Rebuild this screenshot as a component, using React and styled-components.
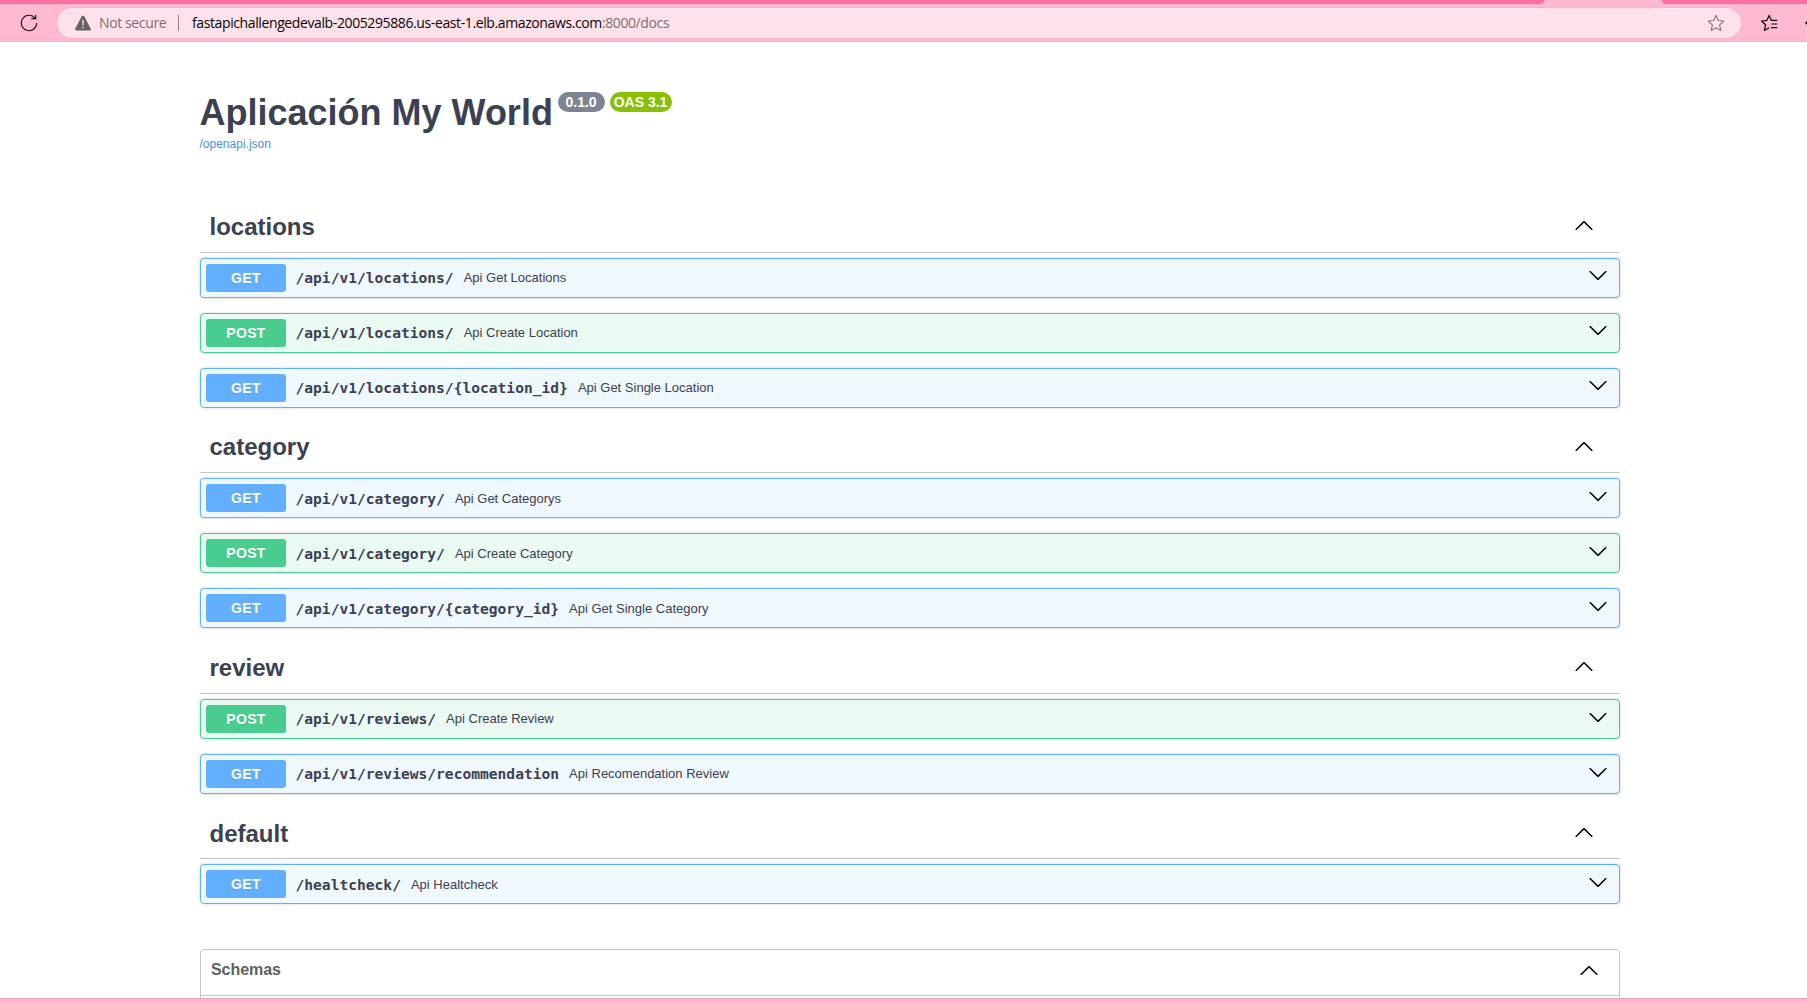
import React from "react";
import styled, { createGlobalStyle } from "styled-components";

const GlobalStyle = createGlobalStyle`
  * { box-sizing: border-box; }
  body {
    margin: 0;
    background: #fff;
    color: #3b4151;
    font-family: "Liberation Sans", Arial, sans-serif;
    overflow: hidden;
  }
`;

const Window = styled.div`
  display: flex;
  flex-direction: column;
  height: 1002px;
  overflow: hidden;
`;

const TabStrip = styled.div`
  display: flex;
  justify-content: space-between;
  flex: none;
  height: 4px;
  background: #ffbad1;
`;

const TabEdge = styled.div`
  width: ${(p) => p.$width}px;
  background: #ff70a0;
  border-radius: ${(p) => (p.$side === "left" ? "0 0 6px 0" : "0 0 0 6px")};
`;

const Toolbar = styled.header`
  display: flex;
  align-items: center;
  flex: none;
  height: 38px;
  padding: 0 0 0 19px;
  background: #ffbad1;
  box-shadow: inset 0 -1px #f8b4cb;
  overflow: hidden;
`;

const AddressBar = styled.div`
  display: flex;
  align-items: center;
  flex: none;
  width: 1684px;
  height: 30px;
  margin-left: 18px;
  padding: 0 15px 0 17px;
  border-radius: 15px;
  background: #ffe1ea;
  box-shadow: 0 0 3px rgba(190, 80, 120, 0.16);
  font: 14px/30px "Open Sans", "Noto Sans", sans-serif;
  white-space: nowrap;
`;

const Security = styled.span`
  width: 68px;
  margin-left: 7px;
  color: #767074;
  letter-spacing: -0.38px;
`;

const Divider = styled.i`
  width: 1px;
  height: 16px;
  margin: 0 13px 0 11px;
  background: #8f8187;
`;

const Url = styled.span`
  flex: 1;
  color: #080808;
  letter-spacing: -0.39px;
`;

const UrlTail = styled.span`
  color: #7b7074;
`;

const ToolIcon = styled.svg`
  display: block;
  flex: none;
  margin-left: ${(p) => p.$gap || 0}px;
  overflow: visible;
`;

const Page = styled.main`
  display: flex;
  flex-direction: column;
  flex: none;
  width: 1420px;
  height: 956px;
  margin: 0 auto 0 200px;
  overflow: visible;
`;

const Info = styled.section`
  flex: none;
  height: 161px;
  padding-top: 50px;
`;

const TitleRow = styled.div`
  display: flex;
  align-items: flex-start;
  height: 43px;
`;

const Title = styled.h1`
  width: 352px;
  margin: 0 6.5px 0 -0.5px;
  font-size: 36px;
  line-height: 42px;
  white-space: nowrap;
`;

const Badge = styled.span`
  flex: none;
  width: ${(p) => p.$width}px;
  height: 20px;
  margin: 0 5px 0 0;
  padding-left: ${(p) => p.$inset}px;
  border-radius: 10px;
  background: ${(p) => p.$color};
  color: #fff;
  font: bold 14px/20px "Liberation Sans", Arial, sans-serif;
  white-space: nowrap;
`;

const SpecLink = styled.a`
  display: block;
  margin-left: -0.5px;
  color: #4990e2;
  font-size: 12px;
  line-height: 18px;
`;

const Section = styled.section`
  display: flex;
  flex-direction: column;
  flex: none;
`;

const SectionHeader = styled.div`
  display: flex;
  align-items: flex-start;
  justify-content: space-between;
  height: ${(p) => p.$height}px;
  margin-bottom: 5px;
  padding: 10px 26px 0 9.5px;
  border-bottom: 1px solid #c4c6ca;
`;

const SectionTitle = styled.h3`
  margin: ${(p) => p.$drop}px 0 0;
  font-size: 24px;
  line-height: 28px;
`;

const Chevron = styled.svg`
  display: block;
  flex: none;
  width: 20px;
  height: 20px;
  margin-top: ${(p) => p.$top}px;
  transform: ${(p) => (p.$down ? "rotate(180deg)" : "none")};
  fill: #000;
`;

const tones = {
  GET: ["#61affe", "#eff7ff"],
  POST: ["#49cc90", "#eaf9f2"],
};

const Operation = styled.div`
  display: flex;
  align-items: flex-start;
  height: 40px;
  margin-bottom: 15px;
  padding: 5px 11px 5px 5px;
  border: 1px solid ${(p) => tones[p.$method][0]};
  border-radius: 4px;
  background: ${(p) => tones[p.$method][1]};
  box-shadow: 0 0 3px rgba(0, 0, 0, 0.19);
`;

const Method = styled.span`
  width: 80px;
  height: 28px;
  border-radius: 3px;
  background: ${(p) => tones[p.$method][0]};
  color: #fff;
  font-size: 14px;
  font-weight: 700;
  line-height: 28px;
  letter-spacing: 0.35px;
  text-align: center;
  text-shadow: 0 1px 0 rgba(0, 0, 0, 0.1);
`;

const Path = styled.span`
  margin: ${(p) => p.$drop}px 10px 0 9.5px;
  font: bold 14.6px/28px "DejaVu Sans Mono", monospace;
  white-space: nowrap;
`;

const Summary = styled.span`
  flex: 1;
  margin-top: ${(p) => p.$drop}px;
  font-size: 13px;
  line-height: 27px;
  white-space: nowrap;
`;

const Schemas = styled.section`
  flex: none;
  height: 60px;
  margin-top: 30px;
  border: 1px solid #c4c6ca;
  border-radius: 4px;
`;

const SchemasHeader = styled.div`
  display: flex;
  justify-content: space-between;
  height: 46px;
  padding: 10px 20px 0 10px;
  border-bottom: 1px solid #c4c6ca;
`;

const SchemasTitle = styled.h4`
  margin: 0;
  color: #606060;
  font-size: 16px;
  line-height: 19px;
  letter-spacing: -0.05px;
`;

const BottomEdge = styled.footer`
  position: relative;
  flex: none;
  height: 4px;
  background: #fdb7ce;
  border-top: 1px solid #e3a2b7;
`;

const sections = [
  {
    name: "locations",
    headerHeight: 50,
    titleDrop: 0,
    iconDrop: 0,
    rowDrop: 0,
    arrowDrop: 0,
    operations: [
      ["GET", "/api/v1/locations/", "Api Get Locations"],
      ["POST", "/api/v1/locations/", "Api Create Location"],
      ["GET", "/api/v1/locations/{location_id}", "Api Get Single Location"],
    ],
  },
  {
    name: "category",
    headerHeight: 50,
    titleDrop: 0,
    iconDrop: 1,
    rowDrop: 1,
    arrowDrop: 1,
    operations: [
      ["GET", "/api/v1/category/", "Api Get Categorys"],
      ["POST", "/api/v1/category/", "Api Create Category"],
      ["GET", "/api/v1/category/{category_id}", "Api Get Single Category"],
    ],
  },
  {
    name: "review",
    headerHeight: 51,
    titleDrop: 1,
    iconDrop: 1,
    rowDrop: 0,
    arrowDrop: 1,
    operations: [
      ["POST", "/api/v1/reviews/", "Api Create Review"],
      ["GET", "/api/v1/reviews/recommendation", "Api Recomendation Review"],
    ],
  },
  {
    name: "default",
    headerHeight: 50,
    titleDrop: 1,
    iconDrop: 1,
    rowDrop: 1,
    arrowDrop: 1,
    operations: [["GET", "/healtcheck/", "Api Healtcheck"]],
  },
];

function Arrow({ down, top }) {
  return (
    <Chevron viewBox="0 0 20 20" $down={down} $top={top}>
      <path d="M17.418 14.908c.272.268.709.268.979 0s.271-.701 0-.969l-7.908-7.83c-.27-.268-.707-.268-.979 0l-7.908 7.83c-.27.268-.27.701 0 .969.271.268.709.268.979 0L10 7.767l7.418 7.141z" />
    </Chevron>
  );
}

function BrowserBar() {
  return (
    <>
      <TabStrip>
        <TabEdge $width={1544} $side="left" />
        <TabEdge $width={145} $side="right" />
      </TabStrip>
      <Toolbar>
        <ToolIcon width="20" height="20" viewBox="0 0 20 20" fill="none" stroke="#1c1115" strokeWidth="1.1">
          <path d="M16.2 5.4A7.7 7.7 0 1 0 17.7 10M12.3 5.6h4.4V1.8" />
        </ToolIcon>
        <AddressBar>
          <ToolIcon width="18" height="16" viewBox="0 0 18 16">
            <path d="M7.9 1.1Q9 0 10.1 1.1L16.8 13.7Q17.3 15.3 15.8 15.4H2.2Q.7 15.3 1.2 13.7Z" fill="#666364" />
            <path d="M9 5v5.2M9 11.8v1.5" stroke="#ffe1ea" strokeWidth="1.4" />
          </ToolIcon>
          <Security>Not secure</Security>
          <Divider />
          <Url>
            fastapichallengedevalb-2005295886.us-east-1.elb.amazonaws.com
            <UrlTail>:8000/docs</UrlTail>
          </Url>
          <ToolIcon width="20" height="20" viewBox="0 0 20 20" fill="none" stroke="#84777c" strokeWidth="1.1" strokeLinejoin="round">
            <path d="M10 2.3l2.2 5.2 5.6.5-4.2 3.8 1.3 5.8L10 14.8l-4.9 2.8 1.3-5.8L2.2 8l5.6-.5Z" />
          </ToolIcon>
        </AddressBar>
        <ToolIcon $gap={18} width="20" height="20" viewBox="0 0 20 20" fill="none" stroke="#0e080a" strokeWidth="1.2" strokeLinejoin="round">
          <path d="M14.2 7.4h-1.8L10.1 2.4 7.9 7.4 2.5 8l4.1 3.8-1.3 5.7 4.9-2.8M12 7.4h6.2M12.4 11h5.8M12 14.6h6.2" />
        </ToolIcon>
        <ToolIcon $gap={25} width="8" height="8" viewBox="0 0 8 8">
          <path d="M1 4l2-2v4Z" fill="#0e080a" />
        </ToolIcon>
      </Toolbar>
    </>
  );
}

export default function App() {
  return (
    <Window>
      <GlobalStyle />
      <BrowserBar />
      <Page>
        <Info>
          <TitleRow>
            <Title>Aplicación My World</Title>
            <Badge $color="#7d8492" $width={47} $inset={7.5}>0.1.0</Badge>
            <Badge $color="#89bf04" $width={62} $inset={3.7}>OAS 3.1</Badge>
          </TitleRow>
          <SpecLink>/openapi.json</SpecLink>
        </Info>
        {sections.map((section) => (
          <Section key={section.name}>
            <SectionHeader $height={section.headerHeight}>
              <SectionTitle $drop={section.titleDrop}>{section.name}</SectionTitle>
              <Arrow top={2 + section.iconDrop} />
            </SectionHeader>
            {section.operations.map(([method, path, summary]) => (
              <Operation key={method + path} $method={method}>
                <Method $method={method}>{method}</Method>
                <Path $drop={section.rowDrop}>{path}</Path>
                <Summary $drop={section.rowDrop}>{summary}</Summary>
                <Arrow down top={2 + section.arrowDrop} />
              </Operation>
            ))}
          </Section>
        ))}
        <Schemas>
          <SchemasHeader>
            <SchemasTitle>Schemas</SchemasTitle>
            <Arrow top={0} />
          </SchemasHeader>
        </Schemas>
      </Page>
      <BottomEdge />
    </Window>
  );
}
